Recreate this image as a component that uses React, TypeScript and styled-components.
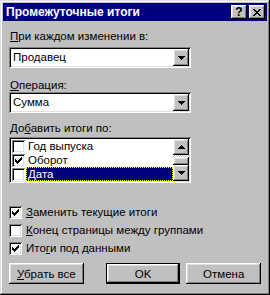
import React from "react";
import styled, { createGlobalStyle } from "styled-components";

const GlobalStyle = createGlobalStyle`
  html, body {
    margin: 0;
    padding: 0;
    background: #c0c0c0;
  }
  body {
    font-family: "Liberation Sans", Arial, sans-serif;
    font-size: 11.5px;
    color: #000;
  }
`;

const raised = `
  box-shadow: inset -1px -1px #000, inset 1px 1px #fff,
    inset -2px -2px #808080, inset 2px 2px #dfdfdf;
`;
const sunken = `
  box-shadow: inset 1px 1px #808080, inset -1px -1px #fff,
    inset 2px 2px #000, inset -2px -2px #dfdfdf;
`;

const Window = styled.div`
  width: 270px;
  height: 295px;
  box-sizing: border-box;
  padding: 3px;
  background: #c0c0c0;
  box-shadow: inset -1px -1px #000, inset 1px 1px #dfdfdf,
    inset -2px -2px #808080, inset 2px 2px #fff;
  display: flex;
  flex-direction: column;
`;

const TitleBar = styled.div`
  height: 18px;
  background: #000080;
  color: #fff;
  display: flex;
  align-items: center;
  justify-content: space-between;
  padding: 0 2px 0 3px;
`;

const Title = styled.span`
  font-weight: bold;
  font-size: 12px;
`;

const CaptionButtons = styled.div`
  display: flex;
  gap: 2px;
`;

const CaptionButton = styled.div`
  width: 16px;
  height: 14px;
  background: #c0c0c0;
  ${raised}
  color: #000;
  display: flex;
  align-items: center;
  justify-content: center;
  font-weight: bold;
  font-size: 12px;
  line-height: 14px;
`;

const Content = styled.div`
  display: flex;
  flex-direction: column;
  padding: 0 6px;
`;

const Label = styled.div<{ $top: number }>`
  margin-top: ${(p) => p.$top}px;
  height: 13px;
  line-height: 13px;
  padding-left: 1px;
`;

const Combo = styled.div<{ $top: number }>`
  margin-top: ${(p) => p.$top}px;
  width: 182px;
  height: 21px;
  box-sizing: border-box;
  padding: 2px;
  background: #fff;
  ${sunken}
  display: flex;
`;

const ComboText = styled.div`
  flex: 1;
  padding-left: 2px;
  line-height: 17px;
`;

const ArrowButton = styled.div<{ $h?: number }>`
  width: 16px;
  height: ${(p) => p.$h ?? 17}px;
  box-sizing: border-box;
  background: #c0c0c0;
  ${raised}
  display: flex;
  align-items: center;
  justify-content: center;
  flex-shrink: 0;
`;

const ListBox = styled.div<{ $top: number }>`
  margin-top: ${(p) => p.$top}px;
  width: 182px;
  height: 46px;
  box-sizing: border-box;
  padding: 2px;
  background: #fff;
  ${sunken}
  display: flex;
`;

const Items = styled.div`
  flex: 1;
  overflow: hidden;
`;

const ListRow = styled.div`
  height: 14px;
  display: flex;
  align-items: center;
  padding-left: 1px;
`;

const ItemText = styled.div<{ $selected?: boolean }>`
  flex: 1;
  height: 14px;
  box-sizing: border-box;
  margin-left: 1px;
  padding-left: 1px;
  line-height: 12px;
  background: ${(p) => (p.$selected ? "#000080" : "transparent")};
  color: ${(p) => (p.$selected ? "#fff" : "#000")};
  border: 1px dotted ${(p) => (p.$selected ? "#ffff00" : "transparent")};
`;

const ScrollBar = styled.div`
  width: 16px;
  display: flex;
  flex-direction: column;
`;

const Track = styled.div`
  height: 2px;
  background-color: #fff;
  background-image: conic-gradient(#c0c0c0 25%, #fff 0 50%, #c0c0c0 0 75%, #fff 0);
  background-size: 2px 2px;
`;

const Thumb = styled.div`
  height: 8px;
  background: #c0c0c0;
  ${raised}
`;

const Box = styled.div`
  width: 13px;
  height: 13px;
  box-sizing: border-box;
  background: #fff;
  ${sunken}
  display: flex;
  align-items: center;
  justify-content: center;
  flex-shrink: 0;
`;

const Options = styled.div`
  margin-top: 21px;
  display: flex;
  flex-direction: column;
`;

const CheckRow = styled.div`
  height: 18px;
  display: flex;
  align-items: flex-start;
  gap: 4px;
  & > ${Box} {
    margin-top: 2px;
  }
`;

const CheckLabel = styled.span`
  line-height: 17px;
  white-space: nowrap;
`;

const Buttons = styled.div`
  margin-top: 5px;
  display: flex;
`;

const Button = styled.div<{ $default?: boolean; $gap: number }>`
  margin-left: ${(p) => p.$gap}px;
  width: 75px;
  height: 21px;
  box-sizing: border-box;
  background: #c0c0c0;
  display: flex;
  align-items: center;
  justify-content: center;
  ${(p) =>
    p.$default
      ? `box-shadow: inset 0 0 0 1px #000, inset -2px -2px #000, inset 2px 2px #fff,
    inset -3px -3px #808080, inset 3px 3px #dfdfdf;`
      : raised}
`;

const Pix = styled.svg`
  display: block;
  shape-rendering: crispEdges;
`;

const DownArrow = () => (
  <Pix width="7" height="4" viewBox="0 0 7 4">
    <path d="M0 0h7v1h-7zM1 1h5v1h-5zM2 2h3v1h-3zM3 3h1v1h-1z" fill="#000" />
  </Pix>
);

const UpArrow = () => (
  <Pix width="7" height="4" viewBox="0 0 7 4">
    <path d="M3 0h1v1h-1zM2 1h3v1h-3zM1 2h5v1h-5zM0 3h7v1h-7z" fill="#000" />
  </Pix>
);

const CloseGlyph = () => (
  <Pix width="8" height="7" viewBox="0 0 8 7">
    <path
      d="M0 0h2v1h-2zM6 0h2v1h-2zM1 1h2v1h-2zM5 1h2v1h-2zM2 2h4v1h-4zM3 3h2v1h-2zM2 4h4v1h-4zM1 5h2v1h-2zM5 5h2v1h-2zM0 6h2v1h-2zM6 6h2v1h-2z"
      fill="#000"
    />
  </Pix>
);

const CheckMark = () => (
  <Pix width="7" height="7" viewBox="0 0 7 7">
    <path
      d="M6 0h1v1h-1zM5 1h2v1h-2zM0 2h1v1h-1zM4 2h3v1h-3zM0 3h2v1h-2zM3 3h3v1h-3zM0 4h5v1h-5zM1 5h3v1h-3zM2 6h1v1h-1z"
      fill="#000"
    />
  </Pix>
);

function CheckBox(props: { checked?: boolean }) {
  return <Box>{props.checked && <CheckMark />}</Box>;
}

const fields = [
  { name: "Год выпуска", checked: false },
  { name: "Оборот", checked: true },
  { name: "Дата", checked: false, selected: true },
];

export default function App() {
  return (
    <>
      <GlobalStyle />
      <Window>
        <TitleBar>
          <Title>Промежуточные итоги</Title>
          <CaptionButtons>
            <CaptionButton>?</CaptionButton>
            <CaptionButton>
              <CloseGlyph />
            </CaptionButton>
          </CaptionButtons>
        </TitleBar>
        <Content>
          <Label $top={9}>
            <u>П</u>ри каждом изменении в:
          </Label>
          <Combo $top={4}>
            <ComboText>Продавец</ComboText>
            <ArrowButton>
              <DownArrow />
            </ArrowButton>
          </Combo>
          <Label $top={11}>
            <u>О</u>перация:
          </Label>
          <Combo $top={0}>
            <ComboText>Сумма</ComboText>
            <ArrowButton>
              <DownArrow />
            </ArrowButton>
          </Combo>
          <Label $top={9}>
            До<u>б</u>авить итоги по:
          </Label>
          <ListBox $top={2}>
            <Items>
              {fields.map((f) => (
                <ListRow key={f.name}>
                  <CheckBox checked={f.checked} />
                  <ItemText $selected={f.selected}>{f.name}</ItemText>
                </ListRow>
              ))}
            </Items>
            <ScrollBar>
              <ArrowButton $h={16}>
                <UpArrow />
              </ArrowButton>
              <Track />
              <Thumb />
              <ArrowButton $h={16}>
                <DownArrow />
              </ArrowButton>
            </ScrollBar>
          </ListBox>
          <Options>
            <CheckRow>
              <CheckBox checked />
              <CheckLabel>
                <u>З</u>аменить текущие итоги
              </CheckLabel>
            </CheckRow>
            <CheckRow>
              <CheckBox />
              <CheckLabel>
                <u>К</u>онец страницы между группами
              </CheckLabel>
            </CheckRow>
            <CheckRow>
              <CheckBox checked />
              <CheckLabel>
                Ито<u>г</u>и под данными
              </CheckLabel>
            </CheckRow>
          </Options>
          <Buttons>
            <Button $gap={0}>
              <span>
                <u>У</u>брать все
              </span>
            </Button>
            <Button $gap={22} $default>
              OK
            </Button>
            <Button $gap={6}>Отмена</Button>
          </Buttons>
        </Content>
      </Window>
    </>
  );
}
